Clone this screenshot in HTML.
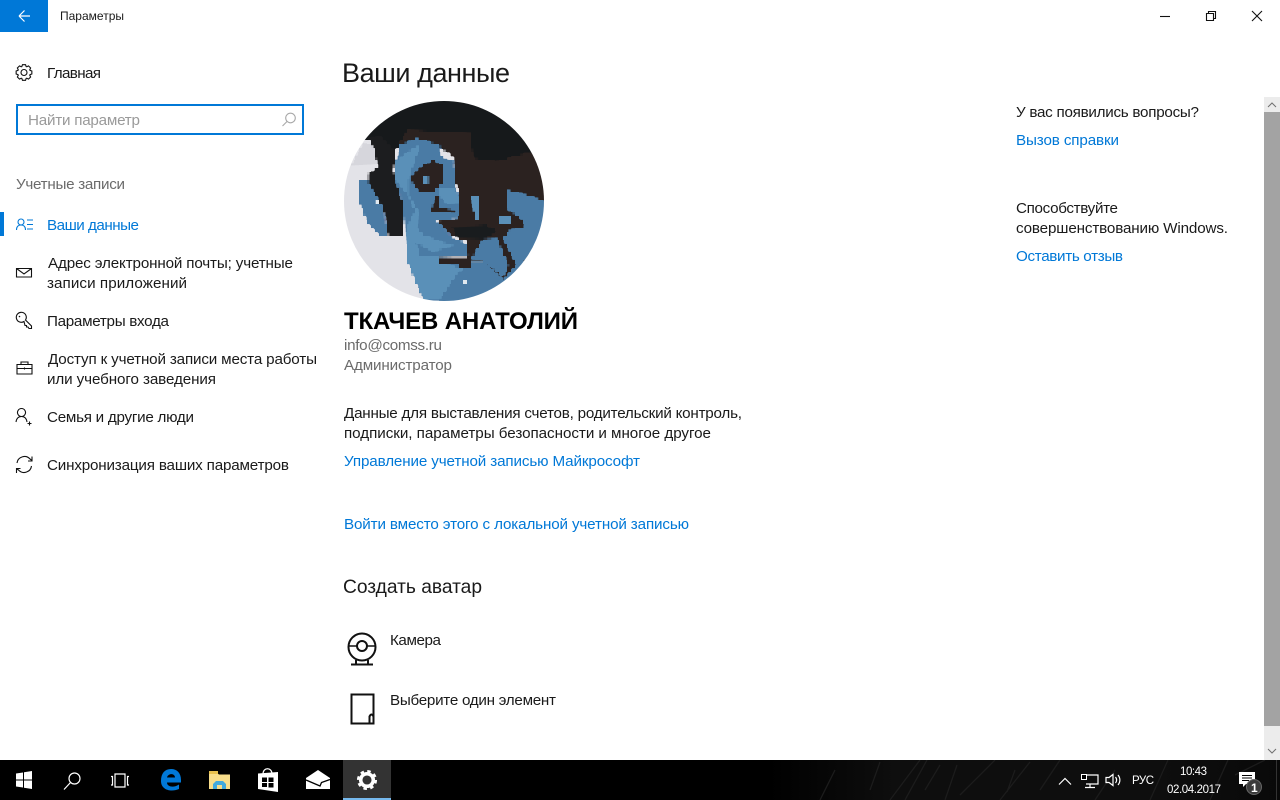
<!DOCTYPE html>
<html lang="ru"><head><meta charset="utf-8"><title>Параметры</title>
<style>
html,body{margin:0;padding:0;background:#fff;width:1280px;height:800px;overflow:hidden}
svg{display:block}
text{font-family:"Liberation Sans",sans-serif;font-size:15.2px;fill:#1a1a1a}
.b{fill:#0078d7}.g{fill:#6b6b6b}.w{fill:#fff}
.ic{fill:none;stroke:#111;stroke-width:1.1}
.t{fill:none;stroke:#fff;stroke-width:1.2}
.s{font-size:11.5px}
</style></head><body>
<svg width="1280" height="800" viewBox="0 0 1280 800" xmlns="http://www.w3.org/2000/svg">
<defs>
<clipPath id="c"><circle cx="444" cy="201" r="100"/></clipPath>
<clipPath id="tc"><rect x="0" y="760" width="1280" height="40"/></clipPath>
<filter id="px" x="340" y="97" width="208" height="208" filterUnits="userSpaceOnUse" color-interpolation-filters="sRGB">
<feFlood x="344" y="101" width="2" height="2" flood-color="#000"/>
<feComposite width="4" height="4"/>
<feTile result="a"/>
<feComposite in="SourceGraphic" in2="a" operator="in"/>
<feMorphology operator="dilate" radius="1"/>
</filter>
<linearGradient id="tb" x1="0" x2="1" y1="0" y2="0"><stop offset="0" stop-color="#000"/><stop offset=".6" stop-color="#000"/><stop offset=".7" stop-color="#0e0e0e"/><stop offset=".9" stop-color="#0e0e0e"/><stop offset="1" stop-color="#090909"/></linearGradient></defs>
<rect width="1280" height="800" fill="#fff"/>

<!-- title bar -->
<rect width="48" height="32" fill="#0078d7"/>
<path d="M19 16H30M19 16l5.500-5.500M19 16l5.500 5.500" fill="none" stroke="#fff" stroke-width="1.2"/>
<text x="60" y="20" style="font-size:12px" textLength="64">Параметры</text>
<path d="M1160 16.500h10" stroke="#111" stroke-width="1.1"/>
<path d="M1206.500 13.500h7v7h-7zM1208.500 13.500v-2h7v7h-2" fill="none" stroke="#111" stroke-width="1.1"/>
<path d="M1252 11l10 10M1262 11l-10 10" stroke="#111" stroke-width="1.1"/>

<!-- sidebar -->
<g class="ic" transform="translate(24 72.500)">
<circle r="3"/>
<path d="M-2.300 -5.540L-1.530 -7.850H1.530L2.300 -5.540"/>
<path transform="rotate(45)" d="M-2.300 -5.540L-1.530 -7.850H1.530L2.300 -5.540"/>
<path transform="rotate(90)" d="M-2.300 -5.540L-1.530 -7.850H1.530L2.300 -5.540"/>
<path transform="rotate(135)" d="M-2.300 -5.540L-1.530 -7.850H1.530L2.300 -5.540"/>
<path transform="rotate(180)" d="M-2.300 -5.540L-1.530 -7.850H1.530L2.300 -5.540"/>
<path transform="rotate(225)" d="M-2.300 -5.540L-1.530 -7.850H1.530L2.300 -5.540"/>
<path transform="rotate(270)" d="M-2.300 -5.540L-1.530 -7.850H1.530L2.300 -5.540"/>
<path transform="rotate(315)" d="M-2.300 -5.540L-1.530 -7.850H1.530L2.300 -5.540"/>
</g>
<text x="47" y="78" textLength="54">Главная</text>
<rect x="17" y="105" width="286" height="29" fill="#fff" stroke="#0078d7" stroke-width="2"/>
<text x="28" y="125" textLength="112" style="fill:#9a9a9a">Найти параметр</text>
<circle cx="290.500" cy="118" r="4.800" fill="none" stroke="#a8a8a8" stroke-width="1.100"/>
<path d="M287 121.500l-4.500 4.500" stroke="#a8a8a8" stroke-width="1.100"/>
<text x="16" y="189" textLength="109" class="g">Учетные записи</text>
<rect x="0" y="212" width="4" height="24" fill="#0078d7"/>
<g fill="none" stroke="#0078d7" stroke-width="1.100">
<circle cx="21" cy="222" r="3"/><path d="M16.500 230c0-3.500 2-5 4.500-5s4.500 1.500 4.500 5M27 220h6M27 224.500h6M27 229h6"/>
</g>
<text x="47" y="230" textLength="92" class="b">Ваши данные</text>

<path class="ic" d="M16.500 268.500h15v8.500h-15zM16.500 268.500l7.500 5.500 7.500-5.500"/>
<text x="48" y="268" textLength="245">Адрес электронной почты; учетные</text>
<text x="47" y="288" textLength="140">записи приложений</text>

<path class="ic" d="M24 321.500a5 5 0 1 1 1.500-1.500l6 6v2.500h-2.500l-1-1.500h-1.500v-1.500h-1.500z"/>
<circle cx="19.500" cy="316.500" r=".8" fill="#111" stroke="none"/>
<text x="47" y="326" textLength="122">Параметры входа</text>

<path class="ic" d="M17 364.500h15v9.500h-15zM21 364.500v-2.500h7v2.500M17 368.500h15M24.500 367.500v2"/>
<text x="48" y="364" textLength="269">Доступ к учетной записи места работы</text>
<text x="47" y="384" textLength="169">или учебного заведения</text>

<path class="ic" d="M21.500 408.500a4 4 0 1 0 .01 0zM16 422c.5-3.500 2.500-5.500 5.500-5.500s5 2 5.500 5.500M27.500 423.500h4M29.500 421.500v4"/>
<text x="47" y="422" textLength="147">Семья и другие люди</text>

<path class="ic" d="M17 463a7.500 7.500 0 0 1 13-4l2 1.500M32 456.500v4.500h-4M31.500 466a7.500 7.500 0 0 1-13 4l-2-1.500M16.500 473v-4.500h4"/>
<text x="47" y="470" textLength="242">Синхронизация ваших параметров</text>

<!-- main -->
<text x="342" y="82" textLength="168" style="font-size:27px">Ваши данные</text>

<g clip-path="url(#c)"><g filter="url(#px)"><g transform="translate(340 95) scale(.33333)">
<rect width="630" height="630" fill="#e3e3e8"/>
<!-- underpaint so no grey shows through on the right -->
<rect x="380" y="100" width="250" height="400" fill="#2b2220"/>
<path fill="#4a7ba5" d="M300 500H630V630H300Z"/>
<!-- top black -->
<path fill="#16191b" d="M0 0H630V190L560 175 470 200 400 190 210 140 160 170 110 130 70 135Z"/>
<path fill="#d6d6dc" d="M30 215L70 140 105 150 115 210Z"/>
<!-- left blue -->
<path fill="#4a7ba5" d="M60 255L85 255 130 340 145 425 120 425 85 390 60 330Z"/>
<!-- left dark strip -->
<path fill="#1c1d1f" d="M85 130L120 125 165 170 160 230 190 330 190 420 145 420 130 340 85 265 85 235 112 215 105 170Z"/>
<!-- brown main -->
<path fill="#2b2220" d="M205 105L390 115 400 190 470 200 560 175 610 180 630 330 560 300 500 280 500 340 550 375 550 395 495 405 540 500 490 555 430 500 385 490 380 440 330 420 290 380 350 370 360 300 345 260 340 190 300 150 230 130 175 150Z"/>
<!-- face blue -->
<path fill="#4a7ba5" d="M165 205L180 150 230 130 300 150 305 185 340 195 345 260 355 300 360 340 350 370 290 378 335 425 380 445 385 485 300 487 300 505 360 517 390 520 430 500 490 555 450 590 340 620 250 620 205 510 195 420 190 330 165 250Z"/>
<!-- face light -->
<path fill="#5a90b8" d="M165 205L205 170 240 150 222 200 205 250 205 300 225 350 200 400 195 420 205 510 250 610 300 610 350 535 370 520 300 505 300 487 240 480 225 440 280 470 340 450 300 440 250 420 230 400 235 350 205 300 165 250Z"/>
<path fill="#5a90b8" d="M295 280H345L358 322 320 325 298 300Z"/>
<!-- eye -->
<path fill="#2b2220" d="M215 240L240 215 280 195 310 210 310 260 280 290 235 290 215 260Z"/>
<path fill="#5a90b8" d="M250 245H265V270H250Z"/>
<!-- nose line -->
<path fill="#2b2220" d="M288 305L300 305 300 340 350 345 345 355 275 350 278 325Z"/>
<!-- mouth -->
<path fill="#191c1e" d="M335 395L440 390 475 410 435 432 350 430Z"/>
<path fill="#2b2220" d="M300 487H390V517H360V505H300Z"/>
<!-- right blue -->
<path fill="#4a7ba5" d="M500 285L560 300 630 325 630 400 570 490 530 510 510 470 490 430 510 405 555 395 550 375 500 340Z"/>
<path fill="#4a7ba5" d="M430 432L470 430 505 510 490 545 430 500 395 490Z"/>
<path fill="#5a90b8" d="M480 365H515V390H480Z"/>
<path fill="#5a90b8" d="M395 305H420V375H405Z"/>
<rect x="110" y="318" width="8" height="8" fill="#e0e8ef"/><rect x="372" y="558" width="10" height="10" fill="#e0e8ef"/>
<path fill="#e3e3e8" d="M160 570L215 585 240 612 180 630 130 600Z"/>
</g></g></g>

<text x="344" y="329" textLength="234" style="font-size:24px;font-weight:700;fill:#000">ТКАЧЕВ АНАТОЛИЙ</text>
<text x="344" y="350" textLength="98" class="g">info@comss.ru</text>
<text x="344" y="370" textLength="108" class="g">Администратор</text>
<text x="344" y="418" textLength="398">Данные для выставления счетов, родительский контроль,</text>
<text x="344" y="438" textLength="367">подписки, параметры безопасности и многое другое</text>
<text x="344" y="466" textLength="296" class="b">Управление учетной записью Майкрософт</text>
<text x="344" y="529" textLength="345" class="b">Войти вместо этого с локальной учетной записью</text>
<text x="343" y="593" textLength="139" style="font-size:19.200px">Создать аватар</text>

<g fill="none" stroke="#111" stroke-width="2">
<circle cx="362" cy="647" r="13.500"/><circle cx="362" cy="646" r="5"/>
<path d="M349 646h8M367 646h8" stroke-width="1.500"/>
<path d="M356 660v4M368 660v4M351 664.500h22"/>
<path d="M351.500 694.500h22v29h-22zM373.500 723.500h-4v-7q2-4 4 0"/>
</g>
<text x="390" y="645" textLength="51">Камера</text>
<text x="390" y="705" textLength="166">Выберите один элемент</text>

<!-- right -->
<text x="1016" y="117" textLength="183">У вас появились вопросы?</text>
<text x="1016" y="145" textLength="103" class="b">Вызов справки</text>
<text x="1016" y="213" textLength="102">Способствуйте</text>
<text x="1016" y="233" textLength="212">совершенствованию Windows.</text>
<text x="1016" y="261" textLength="107" class="b">Оставить отзыв</text>

<!-- scrollbar -->
<rect x="1264" y="97" width="16" height="663" fill="#ececec"/>
<rect x="1264" y="112" width="16" height="614" fill="#a3a3a3"/>
<path d="M1268 107l4-4 4 4M1268 749l4 4 4-4" fill="none" stroke="#707070" stroke-width="1"/>

<!-- taskbar -->
<rect y="760" width="1280" height="40" fill="url(#tb)"/>
<g stroke="#1c1c1c" stroke-width="1.300" fill="none" clip-path="url(#tc)">
<path d="M890 800l30-40M905 800l22-40M960 795l35-35M1000 800l30-38M1040 790l20-30M1210 800l18-40M1235 775l30-15M925 790l15-25M1095 800l20-30M820 800l15-30M870 790l10-28M945 800l12-35M1015 770l-8 22M1150 800l18-40"/>
</g>
<rect x="1276" y="760" width="1" height="40" fill="#333"/>
<path fill="#fff" d="M16 773.500l7-1v7h-7zM24 772.300l8-1.300v8.500h-8zM16 780.500h7v7l-7-1zM24 780.500h8V789l-8-1.300z"/>
<circle cx="74.500" cy="778.500" r="5.500" class="t"/><path d="M70.500 782.500l-6.500 7" class="t"/>
<path class="t" d="M115 774h10v13h-10zM111 776.500h1.500v8.500H111M129 776.500h-1.500v8.500h1.500"/>
<!-- edge -->
<path d="M161 781c0-8 4-12 10-12 6 0 10 4 10 11v2.500h-14c0 4.500 7 5.500 12 2v4.500c-8 3.500-18 1-18-8zM167 777.500h8c0-4.500-7-4.500-8 0z" fill="#0078d7" fill-rule="evenodd"/>
<!-- explorer -->
<path d="M209 773h8l2 1.500h11V789h-21z" fill="#f8dd8a"/><path d="M209 771h9v3h-9z" fill="#e8c04e"/>
<path d="M213 789v-5l3-3h7l3 3v5h-4v-4h-5v4z" fill="#42a9dc"/>
<!-- store -->
<path d="M258 773.500l20-1.500v20l-20-3z" fill="#fff"/><path d="M263 774c0-7 9-7 9 0" class="t"/>
<path d="M262 777.500h5v4.500h-5zM268.500 777.500h5v4.500h-5zM262 783h5v4h-5zM268.500 783h5v4.500h-5z" fill="#000"/>
<!-- mail -->
<path fill="#fff" d="M306 778l12-8 12 8v11h-24z"/>
<path d="M306 780l14 6 1.500-3.500 8.500-3" fill="none" stroke="#000" stroke-width="1.300"/>
<!-- settings -->
<rect x="343" y="760" width="48" height="40" fill="#333"/><rect x="343" y="798" width="48" height="2" fill="#76b9ed"/>
<circle cx="367" cy="780" r="6.300" fill="none" stroke="#fff" stroke-width="3.500"/>
<circle cx="367" cy="780" r="8.800" fill="none" stroke="#fff" stroke-width="2.500" stroke-dasharray="3.500 3.410"/>

<path class="t" d="M1059 784.500l6-6 6 6"/>
<path class="t" d="M1082 775h16v9h-12M1090 784v3M1085 787.500h10"/><rect x="1081.500" y="774.500" width="5" height="5" fill="#000" stroke="#fff"/>
<path class="t" d="M1106 777.500h3l4-3v11l-4-3h-3zM1115.500 777c1.500 2 1.500 4 0 6M1118 775c2.500 3 2.500 7 0 10"/>
<text x="1132" y="784" textLength="22" class="w s">РУС</text>
<text x="1180" y="775" textLength="27" class="w s">10:43</text>
<text x="1167" y="793" textLength="54" class="w s">02.04.2017</text>
<path fill="#fff" d="M1239 772h16v12h-9l-3 3v-3h-4z"/>
<path d="M1242 775.500h10M1242 778h10M1242 780.500h7" stroke="#000" stroke-width="1"/>
<circle cx="1254" cy="787" r="7.500" fill="#3a3a3a" stroke="#666"/>
<text x="1251" y="792" class="w" style="font-size:12px;font-weight:700">1</text>
</svg>
</body></html>
